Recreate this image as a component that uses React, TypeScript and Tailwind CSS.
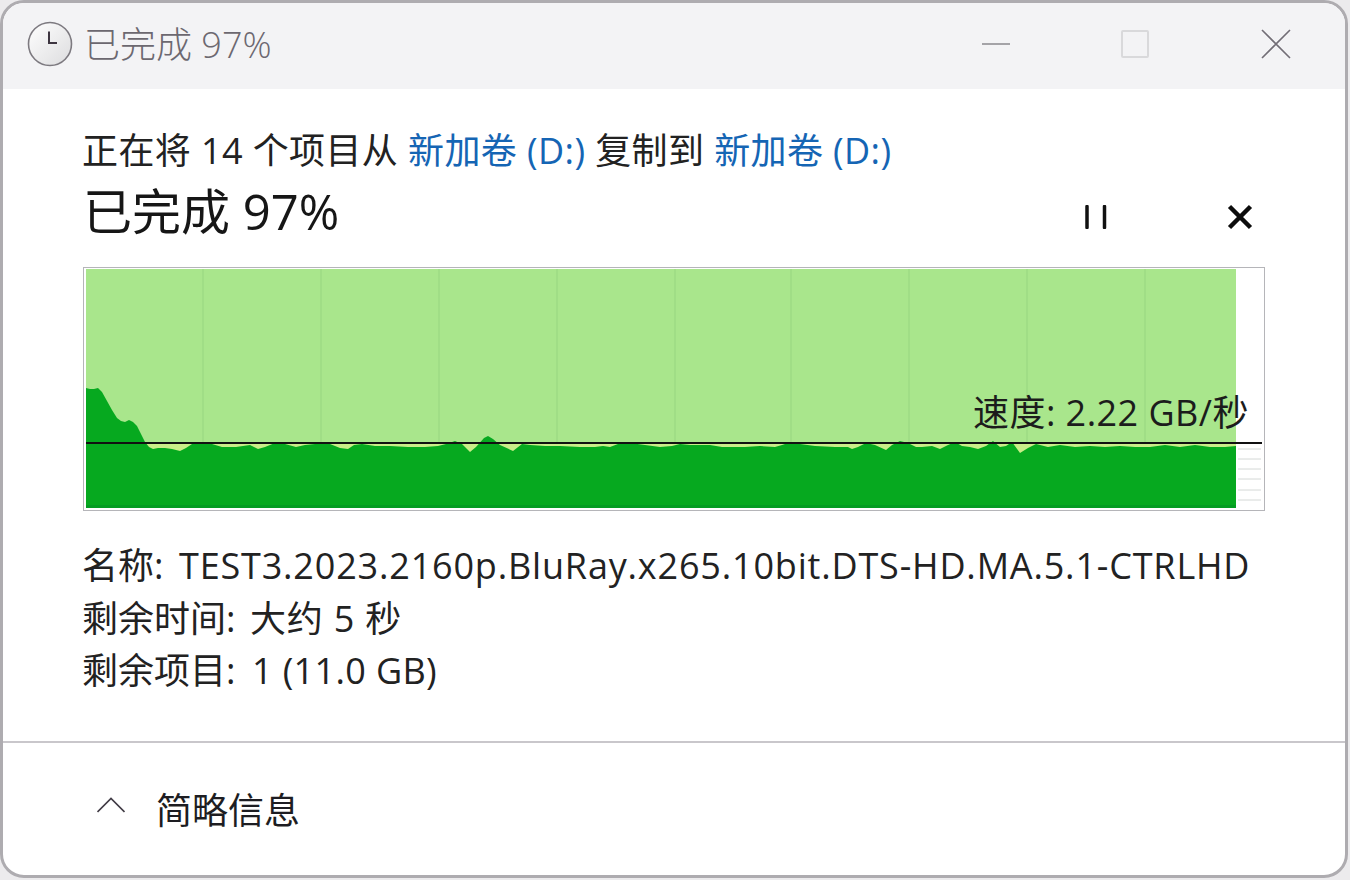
const sans = "font-['Open_Sans','Noto_Sans_CJK_SC',sans-serif]";

const curve: [number, number][] = [
  [86, 388], [90, 389], [94, 389], [98, 388], [102, 392], [107, 401], [112, 410], [117, 418], [121, 421], [125, 422], [129, 420], [133, 422], [137, 426], [141, 434], [145, 442], [149, 447], [153, 449], [158, 448], [165, 448], [172, 449], [180, 451], [186, 448], [192, 444], [205, 443], [212, 444], [222, 447], [236, 447], [250, 445], [258, 449], [265, 447], [275, 443], [285, 444], [296, 447], [305, 445], [315, 444], [330, 444], [340, 448], [348, 449], [354, 445], [362, 444], [375, 446], [390, 446], [408, 447], [425, 447], [438, 446], [446, 444], [455, 441], [462, 444], [470, 452], [476, 447], [484, 438], [488, 436], [493, 439], [500, 445], [513, 451], [522, 444], [530, 445], [545, 446], [560, 446], [580, 447], [595, 447], [603, 446], [610, 447], [618, 444], [630, 443], [645, 445], [660, 447], [672, 446], [680, 444], [690, 445], [710, 445], [722, 447], [745, 447], [760, 446], [775, 447], [782, 445], [788, 443], [800, 444], [815, 446], [835, 447], [848, 447], [852, 449], [858, 447], [866, 443], [875, 445], [886, 450], [892, 445], [900, 441], [908, 443], [916, 447], [922, 447], [932, 446], [940, 449], [948, 445], [955, 442], [962, 446], [970, 447], [978, 449], [986, 446], [993, 441], [1000, 447], [1006, 446], [1012, 442], [1020, 453], [1028, 448], [1036, 444], [1048, 447], [1060, 445], [1075, 447], [1090, 446], [1105, 447], [1120, 446], [1135, 447], [1150, 447], [1165, 445], [1180, 447], [1195, 445], [1210, 447], [1225, 447], [1236, 446],
];

const darkPoints = curve.map(([x, y]) => `${x - 83},${y - 267}`).join(" ");
const gridLines = [203, 321, 439, 557, 675, 791, 909, 1027, 1145];
const tickLines = [449, 459, 469, 479, 490, 500];

function Chart() {
  return (
    <div className="relative h-[244px] w-[1182px] border border-[#b5b5b9] bg-white">
      <svg className="absolute -left-px -top-px block" width="1182" height="244" viewBox="0 0 1182 244">
        <rect x="3" y="2" width="1150" height="239" fill="#a9e68c" />
        {gridLines.map((x) => (
          <line key={x} x1={x - 83} y1="2" x2={x - 83} y2="176" stroke="#97d680" strokeWidth="1" />
        ))}
        {tickLines.map((y) => (
          <line key={y} x1="1155" y1={y - 267} x2="1178" y2={y - 267} stroke="#d4d8d6" strokeWidth="1" />
        ))}
        <rect x="3" y="176" width="1150" height="14" fill="#c9ee88" />
        <polygon points={`3,241 ${darkPoints} 1153,241`} fill="#06a91f" />
        <rect x="3" y="238" width="1150" height="3" fill="#049c22" />
        <line x1="3" y1="176" x2="1179" y2="176" stroke="#111" strokeWidth="2" />
      </svg>
      <span className={`${sans} absolute left-[889px] top-[120px] text-[36px] leading-[50px] tracking-[0.45px] whitespace-nowrap text-[#1c1c1c]`}>
        速度: 2.22 GB/秒
      </span>
    </div>
  );
}

export default function App() {
  return (
    <div className={`${sans} h-[880px] w-[1350px] overflow-hidden bg-[#ecebed]`}>
      <div className="flex h-[878px] w-[1348px] flex-col overflow-hidden rounded-[24px] border-[3px] border-[#aeacb0] bg-white">
        <div className="flex h-[86px] shrink-0 items-center bg-[#f3f3f5] pb-[4px] pl-[24px]">
          <svg width="46" height="46" viewBox="0 0 46 46" className="shrink-0">
            <defs>
              <linearGradient id="clockFace" x1="0" y1="0" x2="1" y2="1">
                <stop offset="0" stopColor="#ffffff" />
                <stop offset="1" stopColor="#dcdcde" />
              </linearGradient>
            </defs>
            <circle cx="23" cy="23" r="21.5" fill="url(#clockFace)" stroke="#7d7a80" strokeWidth="1.6" />
            <path d="M22 10.5V22H30" fill="none" stroke="#3d3540" strokeWidth="2" />
          </svg>
          <span className="mt-[1px] ml-[11px] text-[36px] leading-none font-light text-[#6c6870]">已完成 97%</span>
          <div className="ml-auto flex items-center">
            <svg width="30" height="4" viewBox="0 0 30 4" className="mr-[109px]">
              <line x1="0" y1="2" x2="28" y2="2" stroke="#8a888d" strokeWidth="1.5" />
            </svg>
            <div className="mr-[112px] h-[28px] w-[28px] rounded-[2px] border-2 border-[#d9d9db]" />
            <svg width="30" height="30" viewBox="0 0 30 30" className="mr-[54px]">
              <path d="M1 1L29 29M29 1L1 29" fill="none" stroke="#726e76" strokeWidth="1.6" />
            </svg>
          </div>
        </div>

        <div className="flex flex-1 flex-col pl-[79px]">
          <div className="mt-[34px] h-[56px] text-[36px] leading-[56px] tracking-[0.4px] whitespace-nowrap text-[#222]">
            正在将 14 个项目从 <span className="text-[#1565b4]">新加卷 (D:)</span> 复制到{" "}
            <span className="text-[#1565b4]">新加卷 (D:)</span>
          </div>
          <div className="flex h-[68px] items-center whitespace-nowrap">
            <span className="mb-[4px] ml-[1px] text-[49px] leading-none text-[#161616]">已完成 97%</span>
            <div className="ml-auto flex items-center pt-[8px]">
              <svg width="24" height="24" viewBox="0 0 24 24" className="mr-[119px]">
                <path d="M3 1.5V22.5M20.5 1.5V22.5" fill="none" stroke="#111" strokeWidth="3.5" strokeLinecap="round" />
              </svg>
              <svg width="26" height="26" viewBox="0 0 26 26" className="mr-[92px]">
                <path d="M2.5 2.5L23.5 23.5M23.5 2.5L2.5 23.5" fill="none" stroke="#0c0c0c" strokeWidth="4.5" />
              </svg>
            </div>
          </div>
          <div className="mt-[20px] ml-[1px]">
            <Chart />
          </div>
          <div className="mt-[29px] flex flex-col text-[36px] leading-[52.5px] whitespace-nowrap text-[#222]">
            <div className="flex">
              <span className="w-[97px]">名称:</span>
              <span className="tracking-[0.82px]">TEST3.2023.2160p.BluRay.x265.10bit.DTS-HD.MA.5.1-CTRLHD</span>
            </div>
            <div className="flex">
              <span className="w-[168px]">剩余时间:</span>
              <span className="tracking-[0.8px]">大约 5 秒</span>
            </div>
            <div className="flex">
              <span className="w-[170px]">剩余项目:</span>
              <span className="tracking-[0.35px]">1 (11.0 GB)</span>
            </div>
          </div>
        </div>

        <div className="flex h-[134px] shrink-0 items-center border-t-2 border-[#c9c7cb] pl-[94px]">
          <svg width="28" height="16" viewBox="0 0 28 16" className="mb-[9px]">
            <path d="M0.5 15L14 1.5L27.5 15" fill="none" stroke="#443f48" strokeWidth="1.7" />
          </svg>
          <span className="mt-[4px] ml-[31px] text-[36px] leading-none text-[#1d1d22]">简略信息</span>
        </div>
      </div>
    </div>
  );
}
